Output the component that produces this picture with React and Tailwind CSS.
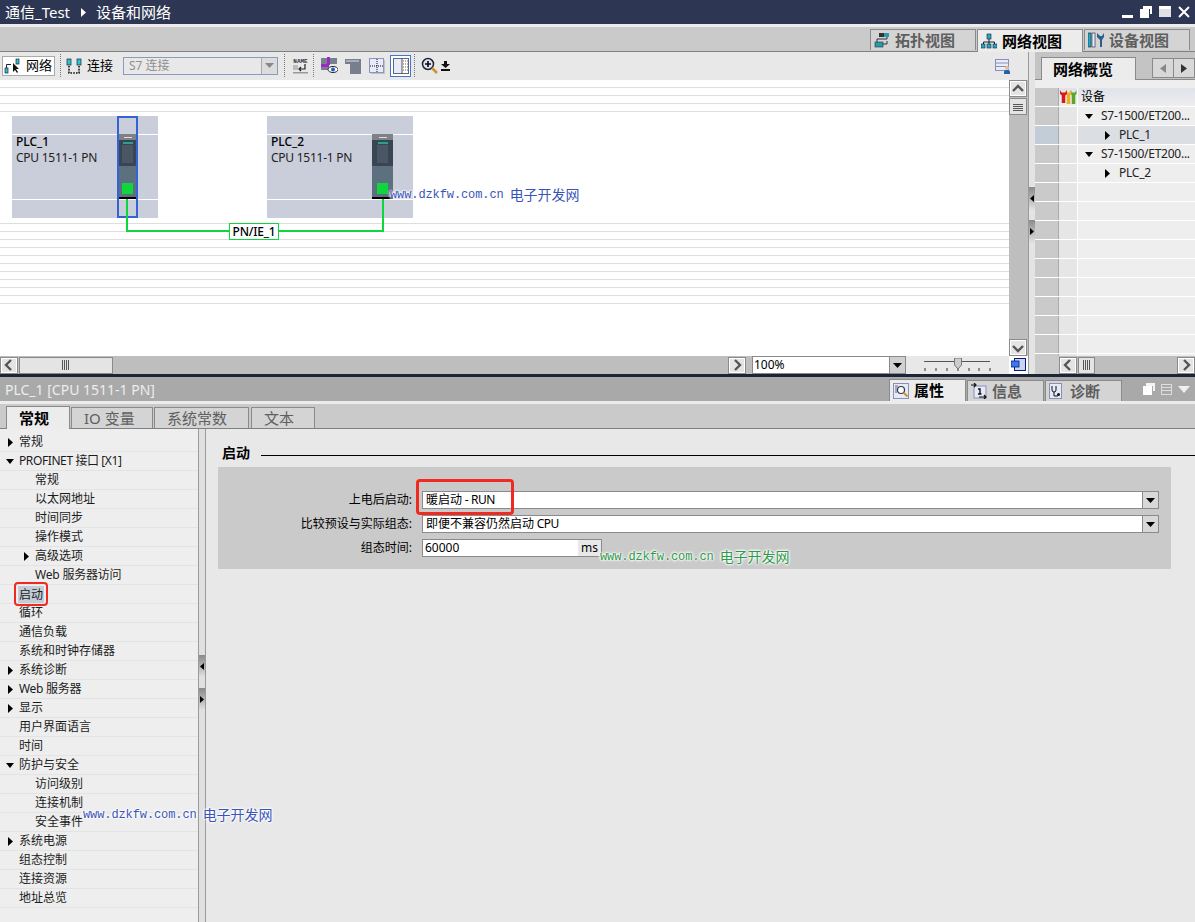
import React from 'react';

const treeRows = [
  { label: '常规', arrow: 'right', level: 0 },
  { label: 'PROFINET 接口 [X1]', arrow: 'down', level: 0, tight: 'tracking-[-0.4px]' },
  { label: '常规', level: 1 },
  { label: '以太网地址', level: 1 },
  { label: '时间同步', level: 1 },
  { label: '操作模式', level: 1 },
  { label: '高级选项', arrow: 'right', level: 1 },
  { label: 'Web 服务器访问', level: 1, tight: 'tracking-[-0.2px]' },
  { label: '启动', level: 0, selected: true },
  { label: '循环', level: 0 },
  { label: '通信负载', level: 0 },
  { label: '系统和时钟存储器', level: 0 },
  { label: '系统诊断', arrow: 'right', level: 0 },
  { label: 'Web 服务器', arrow: 'right', level: 0, tight: 'tracking-[-0.3px]' },
  { label: '显示', arrow: 'right', level: 0 },
  { label: '用户界面语言', level: 0 },
  { label: '时间', level: 0 },
  { label: '防护与安全', arrow: 'down', level: 0 },
  { label: '访问级别', level: 1 },
  { label: '连接机制', level: 1 },
  { label: '安全事件', level: 1 },
  { label: '系统电源', arrow: 'right', level: 0 },
  { label: '组态控制', level: 0 },
  { label: '连接资源', level: 0 },
  { label: '地址总览', level: 0 },
];

const overviewRows = [
  { label: 'S7-1500/ET200...', arrow: 'down', indent: 'pl-[7px]' },
  { label: 'PLC_1', arrow: 'right', indent: 'pl-[25px]', selected: true },
  { label: 'S7-1500/ET200...', arrow: 'down', indent: 'pl-[7px]' },
  { label: 'PLC_2', arrow: 'right', indent: 'pl-[25px]' },
];

const Arrow = ({ dir, className = '' }) => (
  <svg width="9" height="9" viewBox="0 0 9 9" className={className}>
    {dir === 'down' ? <path d="M0 2h8L4 7z" fill="#000" /> : <path d="M2 0l5 4.500L2 9z" fill="#000" />}
  </svg>
);

const Chevron = ({ dir }) => {
  const d = {
    left: 'M9 2L4 7l5 5',
    right: 'M5 2l5 5-5 5',
    up: 'M2 9l5-5 5 5',
    down: 'M2 5l5 5 5-5',
  }[dir];
  return (
    <svg width="14" height="14" viewBox="0 0 14 14">
      <path d={d} fill="none" stroke="#555" strokeWidth="2.400" />
    </svg>
  );
};

const ScrollBtn = ({ dir, className = 'w-[18px] h-[17px]' }) => (
  <div className={`${className} shrink-0 flex items-center justify-center bg-[#e4e4e4] border border-[#8a8a8a] outline outline-1 -outline-offset-2 outline-white`}>
    <Chevron dir={dir} />
  </div>
);

const Grip = ({ vertical }) => (
  <svg width="12" height="12" viewBox="0 0 12 12">
    {vertical
      ? <path d="M2.500 1v10M4.500 1v10M6.500 1v10M8.500 1v10" stroke="#555" />
      : <path d="M1 3.500h10M1 5.500h10M1 7.500h10M1 9.500h10" stroke="#555" />}
  </svg>
);

const Sep = () => <div className="h-[23px] border-l border-dotted border-[#777] mx-[3px]" />;

const SplitHandle = ({ dir, className = '' }) => (
  <div className={`${className} w-full h-[23px] bg-gradient-to-b from-[#8a8a8a] to-[#e4e4e4] flex items-center justify-center`}>
    <svg width="4" height="7" viewBox="0 0 4 7">
      <path d={dir === 'left' ? 'M4 0L0 3.500 4 7z' : 'M0 0l4 3.500L0 7z'} fill="#000" />
    </svg>
  </div>
);

const DropArrow = ({ fill = '#000' }) => (
  <svg width="9" height="5" viewBox="0 0 9 5"><path d="M0 0h9L4.500 5z" fill={fill} /></svg>
);

const NetIcon = () => (
  <svg width="16" height="16" viewBox="0 0 16 16">
    <rect x="1" y="10" width="3" height="5" fill="#25c5d6" stroke="#223" strokeWidth=".7" />
    <rect x="12" y="1" width="3" height="5" fill="#25c5d6" stroke="#223" strokeWidth=".7" />
    <path d="M2.500 10V6.500H7" fill="none" stroke="#223" />
    <path d="M9 5v9l2-2 2 3 1-1-2-3h3z" fill="#111" />
  </svg>
);

const ConnIcon = () => (
  <svg width="16" height="16" viewBox="0 0 16 16">
    <rect x="1" y="1" width="4" height="6" fill="#25c5d6" stroke="#223" strokeWidth=".7" />
    <rect x="11" y="1" width="4" height="6" fill="#25c5d6" stroke="#223" strokeWidth=".7" />
    <path d="M3 8v7h10V8" fill="none" stroke="#111" strokeWidth="1.600" strokeDasharray="1.600 1.200" />
  </svg>
);

const NameIcon = () => (
  <svg width="17" height="17" viewBox="0 0 17 17">
    <text x="8.500" y="5.500" textAnchor="middle" fontSize="6" fontWeight="700" fontFamily="Liberation Mono, monospace" fill="#333">NAME</text>
    <rect x="1" y="8" width="5" height="5" fill="#bbb" />
    <path d="M13 7v5H7m2-2l-2 2 2 2" fill="none" stroke="#222" strokeWidth="1.200" />
    <rect x="1" y="15" width="15" height="1.500" fill="#999" />
  </svg>
);

const EyeIcon = () => (
  <svg width="17" height="17" viewBox="0 0 17 17">
    <rect x="0" y="1" width="16" height="6" fill="#78808f" />
    <rect x="0" y="10" width="8" height="3" fill="#78808f" />
    <rect x="0" y="7" width="8" height="3" fill="#9a2bc0" />
    <rect x="6" y="0" width="3" height="8" fill="#9a2bc0" />
    <ellipse cx="12" cy="12.500" rx="5" ry="3" fill="#fff" stroke="#222" />
    <circle cx="12" cy="12.500" r="2" fill="#1d5fd0" />
  </svg>
);

const PageIcon = () => (
  <svg width="16" height="16" viewBox="0 0 16 16">
    <path d="M0 1h16v15H5V6H0z" fill="#777f8e" />
    <rect x="1" y="2" width="13" height="2" fill="#a8adb8" />
  </svg>
);

const GridIcon = () => (
  <svg width="16" height="16" viewBox="0 0 16 16">
    <rect x=".5" y=".5" width="14" height="14" fill="#e8ecf8" stroke="#8d94b8" />
    <path d="M1 8h13M8 1v13" stroke="#111" strokeDasharray="1 1" />
    <path d="M15 2v14H2" fill="none" stroke="#9a9fb0" />
  </svg>
);

const TableIcon = () => (
  <svg width="16" height="16" viewBox="0 0 16 16">
    <rect x=".5" y=".5" width="15" height="15" fill="#e8ecf8" stroke="#667" />
    <rect x="9" y="1" width="6" height="14" fill="#fff" />
    <path d="M9 .5v15" stroke="#555" />
    <path d="M10 3h5M10 6h5M10 9h5M10 12h5" stroke="#666" strokeDasharray="1 1" />
  </svg>
);

const ZoomIcon = () => (
  <svg width="18" height="18" viewBox="0 0 18 18">
    <circle cx="7" cy="7" r="5.500" fill="#dfe6f5" stroke="#223" strokeWidth="1.500" />
    <path d="M4 7h6M7 4v6" stroke="#111" strokeWidth="1.700" />
    <path d="M11 11l5 5" stroke="#c9932f" strokeWidth="2.500" />
  </svg>
);

const TopoIcon = () => (
  <svg width="16" height="16" viewBox="0 0 16 16">
    <rect x="5" y="1" width="6" height="4" fill="#333" />
    <rect x="10" y="1" width="5" height="4" fill="#2a9aa6" />
    <rect x="1" y="10" width="8" height="5" fill="#2a9aa6" stroke="#234" strokeWidth=".6" />
    <path d="M3 10V7h10V5M9 12h4V9" fill="none" stroke="#234" />
  </svg>
);

const TreeIcon = () => (
  <svg width="16" height="16" viewBox="0 0 16 16">
    <rect x="6" y="1" width="4" height="5" fill="#25a8c8" stroke="#123" strokeWidth=".6" />
    <path d="M8 6v3M2.500 11V9h11v2M8 9v2" fill="none" stroke="#123" />
    <rect x="0" y="11" width="4" height="4" fill="#25a8c8" stroke="#123" strokeWidth=".6" />
    <rect x="6" y="11" width="4" height="4" fill="#25a8c8" stroke="#123" strokeWidth=".6" />
    <rect x="12" y="11" width="4" height="4" fill="#25a8c8" stroke="#123" strokeWidth=".6" />
  </svg>
);

const DeviceIcon = () => (
  <svg width="16" height="16" viewBox="0 0 16 16">
    <rect x="0" y="1" width="3" height="14" fill="#25a8c8" stroke="#123" strokeWidth=".6" />
    <rect x="4" y="1" width="3" height="14" fill="#e8ecf8" stroke="#123" strokeWidth=".6" />
    <path d="M9 1v4l3 3v7h2V8l2-3V1l-2 3h-2z" fill="#2a5f8f" />
  </svg>
);

// three overlapping spanners: green at the back, red in front
const WrenchIcon = () => (
  <svg width="17" height="16" viewBox="0 0 17 16">
    <path d="M13.500 6v9" stroke="#5aa628" strokeWidth="3.500" />
    <path d="M10.500 1v4l3 2.500 3-2.500V1l-1.500 2.500h-3z" fill="#5aa628" />
    <path d="M8.500 6v9" stroke="#ecae1c" strokeWidth="3.500" />
    <path d="M5.500 1v4l3 2.500 3-2.500V1L10 3.500H7z" fill="#ecae1c" />
    <path d="M3.500 6v8" stroke="#d8181c" strokeWidth="3.500" />
    <path d="M0 1v4l3.500 2.500L7 5V1L5.500 3.500h-4z" fill="#d8181c" />
  </svg>
);

const PropIcon = () => (
  <svg width="16" height="16" viewBox="0 0 16 16">
    <rect x=".5" y=".5" width="15" height="15" fill="#e6eaf8" stroke="#8890b8" />
    <path d="M2 3h3M2 5h2M2 7h2M2 9h2" stroke="#667" />
    <circle cx="8" cy="7" r="3.500" fill="#fff" stroke="#334" strokeWidth="1.200" />
    <path d="M10.500 9.500l4 4" stroke="#c9932f" strokeWidth="2" />
  </svg>
);

const InfoIcon = () => (
  <svg width="16" height="16" viewBox="0 0 16 16">
    <rect x="3" y="3" width="12" height="12" fill="#e6eaf8" stroke="#8890b8" />
    <path d="M0 2h4M3 0l2 2-2 2M8 14h7M13 12l2 2-2 2" fill="none" stroke="#111" strokeWidth="1.200" />
    <path d="M7 6h2v5h1.500M7 11h3" fill="none" stroke="#111" strokeWidth="1.400" />
  </svg>
);

const DiagIcon = () => (
  <svg width="16" height="16" viewBox="0 0 16 16">
    <rect x=".5" y=".5" width="12" height="15" fill="#e6eaf8" stroke="#8890b8" />
    <path d="M3 3v4a2 2 0 004 0V3M5 9v4h4" fill="none" stroke="#111" />
    <circle cx="9.500" cy="11.500" r="1.500" fill="#111" />
  </svg>
);

const Tab = ({ icon, label, active, className = '' }) => (
  <div className={`${className} flex items-center gap-[5px] pl-[3px] font-bold text-[15px] border border-b-0 border-[#8a8a8a] ${active ? 'bg-[#ececec] text-black' : 'bg-[#d4d4d4] text-[#5f5f5f]'}`}>
    {icon}
    <span>{label}</span>
  </div>
);

const LowerTab = ({ label, active, className = '' }) => (
  <div className={`${className} flex items-center pl-[12px] text-[15px] border border-b-0 border-[#8a8a8a] ${active ? 'bg-[#ececec] text-black font-bold h-[23px] -mb-px' : 'bg-[#d4d4d4] text-[#5f5f5f] h-[21px]'}`}>
    {label}
  </div>
);

const Watermark = ({ color, className }) => (
  <div className={`absolute z-20 whitespace-nowrap flex items-center gap-[6px] [text-shadow:0_0_3px_#fff,0_0_3px_#fff,0_0_3px_#fff,0_0_2px_#fff] ${color} ${className}`}>
    <span className="font-['Liberation_Mono',monospace] text-[12px] tracking-[-0.100px]">www.dzkfw.com.cn</span>
    <span className="font-['Noto_Sans_CJK_SC',sans-serif] text-[14px]">电子开发网</span>
  </div>
);

const CpuModule = ({ wide }) => (
  <div className={`absolute top-[18px] h-[65px] flex flex-col bg-[#5d7080] border-b-2 border-black ${wide ? 'left-[105px] w-[21px]' : 'left-[107px] w-[17px]'}`}>
    <div className="h-[6px] shrink-0 bg-[#7d8288] flex justify-center items-center">
      <div className="w-[8px] h-px bg-[#ddd]" />
    </div>
    <div className="h-[26px] shrink-0 bg-[#3a4452] flex flex-col items-center pt-[2px] gap-[1px]">
      <div className="w-[10px] h-[2px] bg-[#2aa090]" />
      <div className="w-[11px] h-[18px] bg-[#4a5664]" />
    </div>
    <div className="flex-1 flex items-end justify-center pb-[3px]">
      <div className="w-[11px] h-[11px] bg-[#0fd63c]" />
    </div>
  </div>
);

const PlcNode = ({ name, selected, className }) => (
  <div className={`absolute top-[36px] w-[146px] h-[102px] bg-[#cacdda] ${className}`}>
    <div className="absolute left-0 right-0 top-[18px] h-px bg-white" />
    <div className="absolute left-0 right-0 top-[83px] h-px bg-white" />
    <div className="absolute left-[4px] top-[19px] text-[12px] leading-[14px] font-medium">{name}</div>
    <div className="absolute left-[4px] top-[35px] text-[12px] leading-[14px] tracking-[-0.25px] text-[#222]">CPU 1511-1 PN</div>
    <CpuModule wide={!selected} />
    {selected && <div className="absolute left-[105px] top-0 w-[21px] h-[102px] border-2 border-[#3464d4]" />}
  </div>
);

const gridYs = [7, 15, 23, 31, 143, 151, 159, 167, 175, 183, 191, 199, 207, 215, 223];

const Canvas = () => (
  <div className="relative flex-1 bg-white overflow-hidden">
    {gridYs.map((y) => (
      <div key={y} className="absolute left-0 right-0 h-px bg-[#dedede]" style={{ top: y }} />
    ))}
    <PlcNode name="PLC_1" selected className="left-[12px]" />
    <PlcNode name="PLC_2" className="left-[267px]" />
    <svg className="absolute left-[120px] top-[119px]" width="270" height="35">
      <path d="M7 0v32h256V0" fill="none" stroke="#0fd63c" strokeWidth="2" />
    </svg>
    <div className="absolute left-[229px] top-[143px] w-[50px] h-[17px] bg-white border border-[#0fd63c] flex items-center justify-center text-[12px] font-medium tracking-[-0.2px]">PN/IE_1</div>
    <Watermark color="text-[#3a55b8]" className="left-[390px] top-[104px]" />
  </div>
);

export default function App() {
  return (
    <div className="w-[1195px] h-[922px] overflow-hidden flex flex-col bg-[#e8e8e8] text-[12px] text-black font-['Noto_Sans','Noto_Sans_CJK_SC',sans-serif]">
      {/* title bar */}
      <div className="h-[24px] shrink-0 bg-[#2d3652] text-white text-[15px] flex items-center justify-between pl-[5px] pr-[5px]">
        <div className="flex items-center gap-[10px]">
          <span>通信_Test</span>
          <svg width="7" height="9" viewBox="0 0 7 9"><path d="M1 0l5 4.500L1 9z" fill="#fff" /></svg>
          <span className="-ml-px">设备和网络</span>
        </div>
        <div className="flex items-center gap-[7px]">
          <svg width="11" height="11" viewBox="0 0 11 11"><rect y="8" width="11" height="3" fill="#fff" /></svg>
          <svg width="12" height="12" viewBox="0 0 12 12"><path d="M3 0h9v8h-2V3H3z" fill="#fff" /><rect y="3" width="9" height="9" fill="#fff" /></svg>
          <svg width="12" height="12" viewBox="0 0 12 12"><rect width="12" height="3" fill="#fff" /><rect y="3" width="12" height="8" fill="#fff" fillOpacity=".85" /></svg>
          <svg width="12" height="12" viewBox="0 0 12 12"><path d="M1 1l10 10M11 1L1 11" stroke="#fff" strokeWidth="2" /></svg>
        </div>
      </div>
      <div className="h-[3px] shrink-0 bg-[#ececec]" />

      {/* view tabs */}
      <div className="h-[25px] shrink-0 bg-[#cacaca] border-b border-[#808080] flex justify-end items-end gap-px pr-[5px]">
        <Tab icon={<TopoIcon />} label="拓扑视图" className="w-[106px] h-[21px] mb-[1px]" />
        <Tab icon={<TreeIcon />} label="网络视图" active className="w-[106px] h-[23px] -mb-px" />
        <Tab icon={<DeviceIcon />} label="设备视图" className="w-[106px] h-[21px] mb-[1px]" />
      </div>

      {/* upper area */}
      <div className="h-[322px] shrink-0 flex">
        <div className="w-[1028px] shrink-0 flex flex-col">
          <div className="h-[28px] shrink-0 bg-[#e8e8e8] flex items-center pl-[2px] pb-[1px] text-[13px]">
            <div className="w-[53px] h-[20px] bg-white border border-[#aaa] flex items-center gap-[6px] pl-[1px] mr-[2px]">
              <NetIcon /><span>网络</span>
            </div>
            <Sep />
            <div className="flex items-center gap-[5px] ml-[2px] w-[47px]"><ConnIcon /><span>连接</span></div>
            <div className="w-[155px] h-[18px] ml-[10px] border border-[#8a9bc0] flex items-center text-[#8f8f8f] pl-[5px] text-[12px] relative">
              S7 连接
              <div className="absolute right-0 top-0 bottom-0 w-[16px] border-l border-[#aaa] bg-[#dcdcdc] flex items-center justify-center">
                <DropArrow fill="#888" />
              </div>
            </div>
            <div className="ml-[3px]"><Sep /></div>
            <div className="ml-[4px] mr-[1px]"><NameIcon /></div>
            <Sep />
            <div className="flex items-center gap-[8px] ml-[4px]">
              <div className="-mr-px"><EyeIcon /></div>
              <PageIcon /><GridIcon />
              <div className="w-[21px] h-[22px] -ml-[3px] border border-[#3a78d8] flex items-center justify-center bg-white"><TableIcon /></div>
            </div>
            <Sep />
            <div className="ml-[3px] flex items-center gap-[2px]">
              <ZoomIcon />
              <svg width="9" height="10" viewBox="0 0 9 10"><path d="M3 0h3v3h3L4.500 7 0 3h3zM0 8h9v2H0z" fill="#111" /></svg>
            </div>
            <div className="ml-auto mr-[17px]">
              <svg width="16" height="16" viewBox="0 0 16 16">
                <rect x=".5" y="1.500" width="13" height="11" fill="#e8ecf8" stroke="#8890b8" />
                <path d="M1 5h12M1 8.500h12" stroke="#8890b8" />
                <circle cx="12" cy="10" r="2" fill="#e8c090" />
                <path d="M9 16v-2a3 2 0 016 0v2z" fill="#2060b0" />
              </svg>
            </div>
          </div>

          <div className="flex-1 flex min-h-0">
            <div className="w-[1009px] flex flex-col">
              <Canvas />
            </div>
            <div className="w-[19px] bg-[#bebebe] flex flex-col items-start">
              <ScrollBtn dir="up" />
              <div className="w-[18px] h-[17px] mt-px flex items-center justify-center bg-[#e4e4e4] border border-[#8a8a8a]"><Grip /></div>
              <div className="mt-auto"><ScrollBtn dir="down" /></div>
            </div>
          </div>

          <div className="h-[18px] shrink-0 bg-[#bebebe] flex items-center">
            <ScrollBtn dir="left" />
            <div className="w-[94px] h-[17px] ml-px bg-[#e4e4e4] border border-[#8a8a8a] flex items-center justify-center"><Grip vertical /></div>
            <div className="ml-[615px]"><ScrollBtn dir="right" /></div>
            <div className="w-[6px] h-full shrink-0 bg-[#bebebe]" />
            <div className="w-[154px] shrink-0 h-[18px] bg-white border border-[#8a8a8a] flex items-center pl-px relative">
              100%
              <div className="absolute right-0 top-0 bottom-0 w-[16px] border-l border-[#8a8a8a] bg-[#d0d0d0] flex items-center justify-center">
                <DropArrow />
              </div>
            </div>
            <div className="w-[103px] shrink-0 h-full bg-[#e8e8e8] flex items-center justify-center">
              <svg width="68" height="14" viewBox="0 0 68 14">
                <path d="M0 3.500h66" stroke="#555" />
                <path d="M1 10v3M12 10v3M23 10v3M34 10v3M45 10v3M55 10v3M66 10v3" stroke="#333" />
                <path d="M30.500 0h7v7l-3.500 4-3.500-4z" fill="#ccc" stroke="#777" />
              </svg>
            </div>
            <div className="w-[19px] shrink-0 h-full bg-white flex items-center justify-center">
              <svg width="15" height="14" viewBox="0 0 15 14">
                <rect x="3.500" y=".5" width="11" height="12" fill="#c8d4f0" stroke="#0a1a80" />
                <rect x="0" y="3" width="8" height="6" fill="#3a78f0" stroke="#0a1a80" strokeWidth=".8" />
              </svg>
            </div>
          </div>
        </div>

        {/* splitter */}
        <div className="w-[7px] shrink-0 bg-[#e4e4e4] border-l border-[#9a9a9a] flex flex-col items-center">
          <SplitHandle dir="left" className="mt-[135px]" />
          <SplitHandle dir="right" className="mt-[10px]" />
        </div>

        {/* overview panel */}
        <div className="flex-1 min-w-0 flex flex-col bg-[#eeeeee]">
          <div className="h-[28px] shrink-0 bg-[#c4c4c4] flex items-end pl-[6px] border-b border-[#8a8a8a]">
            <div className="w-[96px] h-[23px] -mb-px bg-[#ececec] border border-b-0 border-[#8a8a8a] flex items-center pl-[11px] text-[15px] font-bold">网络概览</div>
            <div className="ml-[16px] mb-[1px] w-[44px] h-[20px] flex bg-[#d8d8d8] border border-[#8a8a8a]">
              <div className="flex-1 flex items-center justify-center border-r border-[#8a8a8a]"><svg width="6" height="9" viewBox="0 0 6 9"><path d="M6 0L0 4.500 6 9z" fill="#888" /></svg></div>
              <div className="flex-1 flex items-center justify-center"><svg width="6" height="9" viewBox="0 0 6 9"><path d="M0 0l6 4.500L0 9z" fill="#333" /></svg></div>
            </div>
          </div>
          <div className="h-[8px] shrink-0 bg-[#eeeeee]" />
          <div className="h-[19px] shrink-0 flex border-b border-white bg-gradient-to-b from-[#dfe3ea] to-[#eeeeee]">
            <div className="w-[24px] bg-[#c8c8c8] border-r border-[#aaa]" />
            <div className="w-[19px] flex items-center justify-center border-r border-white"><WrenchIcon /></div>
            <div className="pl-[3px] flex items-center">设备</div>
          </div>
          <div className="flex-1 min-h-0 overflow-hidden">
            {Array.from({ length: 14 }).map((_, i) => {
              const row = overviewRows[i];
              return (
                <div key={i} className="h-[19px] flex border-b border-white">
                  <div className={`w-[24px] border-r border-[#aaa] ${row?.selected ? 'bg-[#c3cdd8]' : 'bg-[#cacaca]'}`} />
                  <div className="w-[19px] border-r border-white bg-[#e6e6e6]" />
                  <div className={`flex-1 min-w-0 flex items-center whitespace-nowrap text-[#222] ${row?.indent ?? ''} ${row?.selected ? 'bg-[#dbdfe4]' : ''}`}>
                    {row && <Arrow dir={row.arrow} />}
                    {row && <span className="ml-[7px] tracking-[-0.25px]">{row.label}</span>}
                  </div>
                </div>
              );
            })}
          </div>
          <div className="h-[18px] shrink-0 bg-[#bebebe] flex items-center">
            <div className="w-[24px] h-full bg-[#cacaca]" />
            <ScrollBtn dir="left" />
            <div className="w-[17px] h-[17px] ml-px bg-[#e4e4e4] border border-[#8a8a8a] flex items-center justify-center"><Grip vertical /></div>
            <div className="ml-auto"><ScrollBtn dir="right" /></div>
          </div>
        </div>
      </div>

      <div className="h-[3px] shrink-0 bg-[#1c2438]" />

      {/* inspector header */}
      <div className="h-[24px] shrink-0 bg-[#a9a9a9] flex items-center justify-between">
        <span className="pl-[5px] text-[14px] text-[#ededed]">PLC_1 [CPU 1511-1 PN]</span>
        <div className="flex items-end self-end h-full">
          <Tab icon={<PropIcon />} label="属性" active className="w-[77px] h-[22px]" />
          <Tab icon={<InfoIcon />} label="信息" className="ml-px w-[77px] h-[21px]" />
          <Tab icon={<DiagIcon />} label="诊断" className="ml-px w-[77px] h-[21px]" />
          <div className="w-[73px] h-full flex items-center justify-end gap-[6px] pr-[5px]">
            <svg width="12" height="12" viewBox="0 0 12 12"><path d="M3 0h9v8h-2V3H3z" fill="#f4f4f4" /><rect y="3" width="9" height="9" fill="#fff" /></svg>
            <svg width="11" height="11" viewBox="0 0 11 11"><rect x=".5" y=".5" width="10" height="10" fill="none" stroke="#ddd" /><path d="M1 3.500h9M1 6.500h9" stroke="#ddd" /></svg>
            <svg width="12" height="7" viewBox="0 0 12 7"><path d="M0 0h12L6 7z" fill="#f0f0f0" /></svg>
          </div>
        </div>
      </div>
      <div className="h-[3px] shrink-0 bg-[#ececec]" />

      {/* inspector tabs */}
      <div className="h-[25px] shrink-0 bg-[#cacaca] border-b border-[#808080] flex items-end pl-[6px] gap-px">
        <LowerTab label="常规" active className="w-[64px]" />
        <LowerTab label="IO 变量" className="w-[82px]" />
        <LowerTab label="系统常数" className="w-[95px]" />
        <LowerTab label="文本" className="w-[64px] ml-px" />
      </div>

      {/* inspector body */}
      <div className="flex-1 min-h-0 flex relative">
        <div className="w-[198px] shrink-0 bg-[#eeeeee] pt-[4px] overflow-hidden">
          {treeRows.map((row, i) => (
            <div key={i} className="h-[19px] flex items-center border-b border-[#e3e3e3] text-[#1c1c1c] whitespace-nowrap relative">
              <div className={`${row.level === 1 ? 'w-[35px] pl-[22px]' : 'w-[19px] pl-[6px]'} shrink-0 flex items-center`}>
                {row.arrow && <Arrow dir={row.arrow} />}
              </div>
              {row.selected ? (
                <>
                  <span className="bg-[#c3cdd8] px-px -ml-px leading-[17px]">{row.label}</span>
                  <div className="absolute left-[14px] top-[-3px] w-[34px] h-[24px] border-[2px] border-[#f02a20] rounded-[4px]" />
                </>
              ) : (
                <span className={row.tight}>{row.label}</span>
              )}
            </div>
          ))}
        </div>
        <div className="w-[8px] shrink-0 bg-[#e0e0e0] border-x border-[#9a9a9a] flex flex-col">
          <SplitHandle dir="left" className="mt-[226px]" />
          <SplitHandle dir="right" className="mt-[10px]" />
        </div>

        <div className="flex-1 min-w-0 bg-[#e8e8e8] pl-[12px] pr-[24px] pt-[13px]">
          <div className="flex items-center h-[20px] gap-[11px] pl-[4px] -mr-[24px]">
            <span className="font-bold text-[14px]">启动</span>
            <div className="flex-1 h-px bg-black mt-[6px]" />
          </div>
          <div className="mt-[5px] h-[102px] bg-[#cacaca] pt-[24px] pl-[4px] pr-[12px] flex flex-col gap-[6px]">
            <div className="flex items-center h-[18px] relative">
              <span className="w-[200px] pr-[10px] text-right shrink-0">上电后启动:</span>
              <div className="flex-1 h-[18px] bg-white border border-[#8a8a8a] flex items-center pl-[3px] relative whitespace-pre">
                暖启动<span className="tracking-[-0.4px]"> - RUN</span>
                <div className="absolute right-0 top-0 bottom-0 w-[16px] border-l border-[#8a8a8a] bg-[#d8d8d8] flex items-center justify-center">
                  <DropArrow />
                </div>
              </div>
              <div className="absolute left-[194px] top-[-12px] w-[98px] h-[36px] border-[3px] border-[#f02a20] rounded-[4px]" />
            </div>
            <div className="flex items-center h-[18px]">
              <span className="w-[200px] pr-[10px] text-right shrink-0">比较预设与实际组态:</span>
              <div className="flex-1 h-[18px] bg-white border border-[#8a8a8a] flex items-center pl-[3px] relative whitespace-pre">
                即便不兼容仍然启动<span className="tracking-[-0.5px]"> CPU</span>
                <div className="absolute right-0 top-0 bottom-0 w-[16px] border-l border-[#8a8a8a] bg-[#d8d8d8] flex items-center justify-center">
                  <DropArrow />
                </div>
              </div>
            </div>
            <div className="flex items-center h-[18px]">
              <span className="w-[200px] pr-[10px] text-right shrink-0">组态时间:</span>
              <div className="w-[180px] h-[18px] bg-white border border-[#8a8a8a] flex items-center pl-[2px]">
                <span className="flex-1">60000</span>
                <span className="w-[23px] h-full bg-[#e8e8e8] flex items-center justify-center">ms</span>
              </div>
            </div>
          </div>
        </div>

        <Watermark color="text-[#2e9a4c]" className="left-[600px] top-[117px]" />
        <Watermark color="text-[#3a55b8]" className="left-[83px] top-[375px]" />
      </div>
    </div>
  );
}
